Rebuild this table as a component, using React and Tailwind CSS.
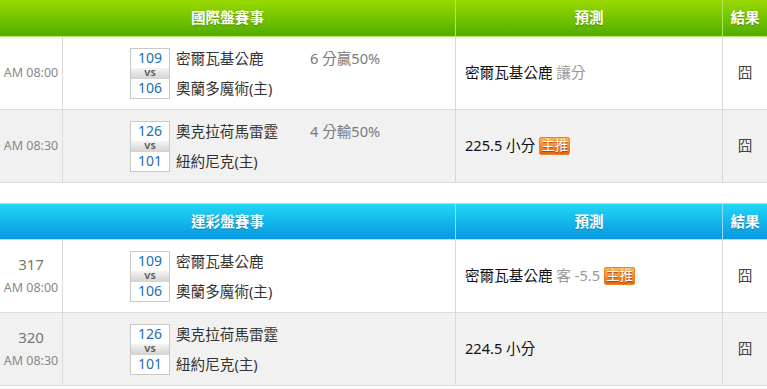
import React from "react";

const font = { fontFamily: '"Noto Sans", "Noto Sans CJK TC", sans-serif' };

function Badge() {
  return (
    <span
      className="inline-flex items-center justify-center ml-[4px] h-[18px] w-[31px] rounded-[2px] border border-[#e9822a] bg-gradient-to-b from-[#ffb24e] to-[#ee6510] text-white text-[13.5px] leading-none align-middle"
      style={{ textShadow: "0 1px 1px rgba(120,40,0,0.7)" }}
    >
      主推
    </span>
  );
}

function VsBox({ a, b }) {
  return (
    <div className="w-[40px] border border-[#c9c9c9] bg-white flex flex-col">
      <div className="h-[19px] flex items-center justify-center text-[#1a6eb3] text-[14px] leading-none">{a}</div>
      <div className="h-[11px] overflow-hidden flex items-center justify-center bg-gradient-to-b from-[#f4f4f4] to-[#d2d2d2] text-[#5a5a5a] text-[9.5px] font-bold leading-none">VS</div>
      <div className="h-[19px] flex items-center justify-center text-[#1a6eb3] text-[14px] leading-none">{b}</div>
    </div>
  );
}

function Row({ alt, code, time, a, b, t1, t2, spread, pred }) {
  return (
    <div className={`flex h-[73px] border-b border-[#dcdcdc] ${alt ? "bg-[#f1f1f1]" : "bg-white"}`}>
      <div className="w-[63px] shrink-0 border-r border-[#d9d9d9] flex flex-col items-center justify-center text-[#888]">
        {code && <div className="text-[15px] leading-none mb-[10px] text-[#777]">{code}</div>}
        <div className="text-[12.5px] leading-none">{time}</div>
      </div>
      <div className="w-[393px] shrink-0 border-r border-[#d9d9d9] flex items-center pl-[67px]">
        <VsBox a={a} b={b} />
        <div className="w-[134px] ml-[6px] flex flex-col text-[14.6px] text-[#333] leading-none">
          <div className="h-[20px] flex items-center">{t1}</div>
          <div className="h-[10px]" />
          <div className="h-[20px] flex items-center">{t2}</div>
        </div>
        <div className="self-start mt-[11px] h-[20px] flex items-center text-[14.6px] text-[#7a7a7a] leading-none">{spread}</div>
      </div>
      <div className="w-[267px] shrink-0 border-r border-[#d9d9d9] flex items-center pl-[9px] text-[14.6px] text-[#111]">
        {pred}
      </div>
      <div className="flex-1 flex items-center justify-center text-[14.6px] text-[#444]">囧</div>
    </div>
  );
}

function Header({ title, green }) {
  const bg = green
    ? "bg-gradient-to-b from-[#9ada00] to-[#4dad00] border-b border-[#b6ee62]"
    : "bg-gradient-to-b from-[#22d6f5] to-[#0a98e2] border-y border-[#a9e4f2]";
  const sep = green ? "border-[#aee85a]" : "border-[#8fdcf5]";
  return (
    <div className={`flex h-[37px] text-white font-bold text-[14.6px] ${bg}`} style={{ textShadow: "0 1px 1px rgba(0,0,0,0.25)" }}>
      <div className={`w-[456px] shrink-0 border-r ${sep} flex items-center justify-center`}>{title}</div>
      <div className={`w-[267px] shrink-0 border-r ${sep} flex items-center justify-center`}>預測</div>
      <div className="flex-1 flex items-center justify-center">結果</div>
    </div>
  );
}

export default function App() {
  return (
    <div className="w-[767px] h-[389px] bg-white overflow-hidden" style={font}>
      <Header title="國際盤賽事" green />
      <Row
        time="AM 08:00"
        a="109"
        b="106"
        t1="密爾瓦基公鹿"
        t2="奧蘭多魔術(主)"
        spread="6 分贏50%"
        pred={<span>密爾瓦基公鹿 <span className="text-[#999]">讓分</span></span>}
      />
      <Row
        alt
        time="AM 08:30"
        a="126"
        b="101"
        t1="奧克拉荷馬雷霆"
        t2="紐約尼克(主)"
        spread="4 分輸50%"
        pred={<span className="flex items-center">225.5 小分<Badge /></span>}
      />
      <div className="h-[20px]" />
      <Header title="運彩盤賽事" />
      <Row
        code="317"
        time="AM 08:00"
        a="109"
        b="106"
        t1="密爾瓦基公鹿"
        t2="奧蘭多魔術(主)"
        spread=""
        pred={<span className="flex items-center">密爾瓦基公鹿&nbsp;<span className="text-[#999]">客 -5.5</span><Badge /></span>}
      />
      <Row
        alt
        code="320"
        time="AM 08:30"
        a="126"
        b="101"
        t1="奧克拉荷馬雷霆"
        t2="紐約尼克(主)"
        spread=""
        pred={<span>224.5 小分</span>}
      />
    </div>
  );
}
